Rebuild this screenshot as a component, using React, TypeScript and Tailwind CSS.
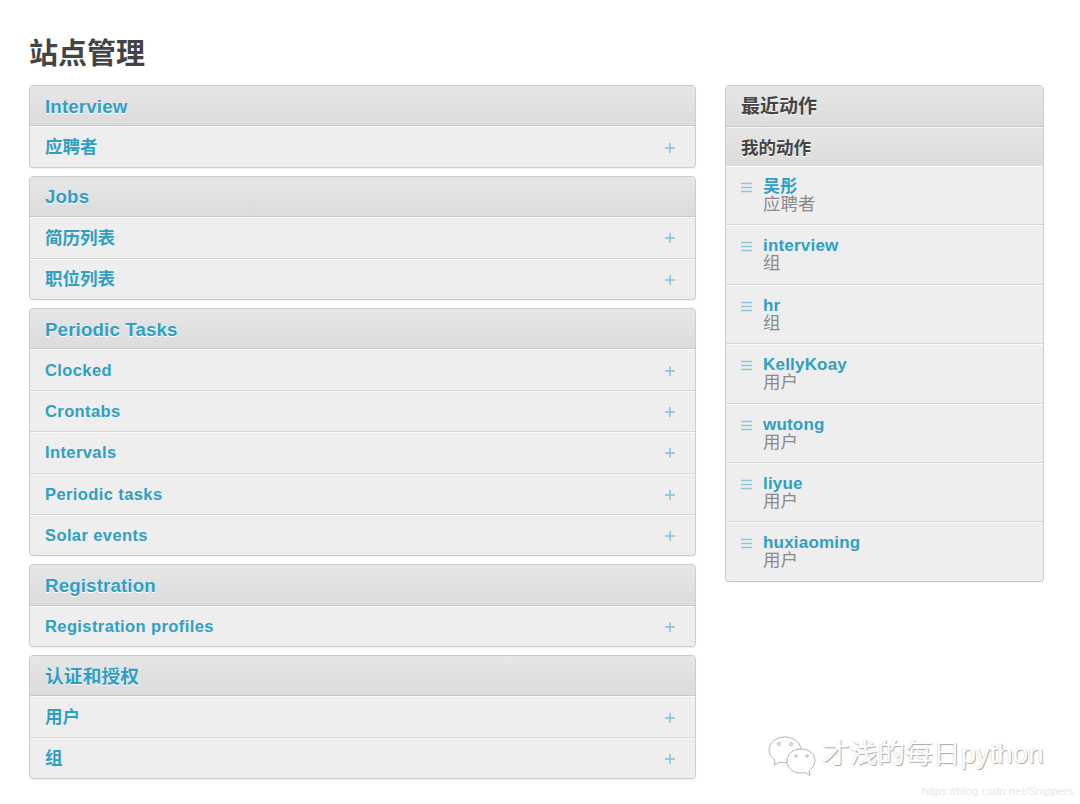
const FONT = "font-['Liberation_Sans','Noto_Sans_CJK_SC',sans-serif]";

const MODULES = [
  { title: "Interview", rows: ["应聘者"] },
  { title: "Jobs", rows: ["简历列表", "职位列表"] },
  { title: "Periodic Tasks", rows: ["Clocked", "Crontabs", "Intervals", "Periodic tasks", "Solar events"] },
  { title: "Registration", rows: ["Registration profiles"] },
  { title: "认证和授权", rows: ["用户", "组"] },
];

const ACTIONS = [
  { name: "吴彤", type: "应聘者" },
  { name: "interview", type: "组" },
  { name: "hr", type: "组" },
  { name: "KellyKoay", type: "用户" },
  { name: "wutong", type: "用户" },
  { name: "liyue", type: "用户" },
  { name: "huxiaoming", type: "用户" },
];

const isLatin = (s: string) => /^[A-Za-z ]+$/.test(s);

function Plus() {
  return (
    <svg width="10" height="10" viewBox="0 0 10 10" className="shrink-0 mt-[1px]">
      <path d="M5 0v10M0 5h10" stroke="#7fc0d8" strokeWidth="1.4" />
    </svg>
  );
}

function Lines() {
  return (
    <svg width="11" height="11" viewBox="0 0 11 11" className="shrink-0">
      <path d="M0 1.500h11M0 5.500h11M0 9.500h11" stroke="#8cc6da" strokeWidth="1.600" />
    </svg>
  );
}

function Panel({ title, rows }: { title: string; rows: string[] }) {
  return (
    <section className="border border-[#cccccc] rounded-[4px] overflow-hidden bg-[#eeeeee] shadow-[0_1px_1px_rgba(0,0,0,0.06)]">
      <h2 className="h-[40.4px] pt-[2px] flex items-center pl-[15px] text-[18.700px] tracking-[0.15px] font-bold text-[#2f9fc2] bg-gradient-to-b from-[#e6e6e6] to-[#dcdcdc] border-b border-[#c8c8c8] [text-shadow:0_1px_0_#ffffff]">
        {title}
      </h2>
      {rows.map((r, i) => (
        <div
          key={r}
          className={`flex items-center justify-between pl-[15px] pr-[20px] border-t border-[#fafafa] ${i < rows.length - 1 ? "h-[41.4px] border-b border-b-[#d6d6d6]" : "h-[40.4px]"}`}
        >
          <span
            className={
              isLatin(r)
                ? "text-[16.500px] tracking-[0.4px] font-bold text-[#2f9fc2]"
                : "text-[17.500px] font-bold text-[#2f9fc2]"
            }
          >
            {r}
          </span>
          <Plus />
        </div>
      ))}
    </section>
  );
}

export default function App() {
  return (
    <div className={`${FONT} relative w-[1080px] h-[804px] overflow-hidden bg-white`}>
      <div className="pt-[35px] pl-[29px] pr-[36px]">
        <h1 className="h-[50px] text-[29px] leading-[38px] font-bold text-[#444444]">站点管理</h1>
        <div className="flex gap-[29px] items-start">
          <div className="w-[667px] flex flex-col gap-[8px]">
            {MODULES.map((m) => (
              <Panel key={m.title} title={m.title} rows={m.rows} />
            ))}
          </div>
          <aside className="w-[319px] border border-[#cccccc] rounded-[4px] overflow-hidden bg-[#eeeeee] shadow-[0_1px_1px_rgba(0,0,0,0.06)]">
            <h2 className="h-[41px] pt-[2px] flex items-center pl-[15px] text-[19px] font-bold text-[#444444] bg-gradient-to-b from-[#e6e6e6] to-[#dcdcdc] border-b border-[#c8c8c8] [text-shadow:0_1px_0_#ffffff]">
              最近动作
            </h2>
            <h3 className="h-[39px] pt-[2px] flex items-center pl-[15px] text-[17.500px] font-bold text-[#444444] bg-gradient-to-b from-[#e6e6e6] to-[#dcdcdc] border-t border-[#f4f4f4] [text-shadow:0_1px_0_#ffffff]">
              我的动作
            </h3>
            {ACTIONS.map((a, i) => (
              <div
                key={a.name}
                className={`flex gap-[11px] pl-[15px] pt-[15px] border-t border-[#fafafa] ${i < ACTIONS.length - 1 ? "h-[59.4px] border-b border-b-[#d8d8d8]" : "h-[58.4px]"}`}
              >
                <Lines />
                <div className="flex flex-col -mt-[4px]">
                  <span className="text-[17px] tracking-[0.2px] leading-[17px] font-bold text-[#2f9fc2]">{a.name}</span>
                  <span className="text-[17.500px] leading-[18px] text-[#8a8a8a]">{a.type}</span>
                </div>
              </div>
            ))}
          </aside>
        </div>
      </div>

      {/* watermark */}
      <div className="absolute left-[768px] top-[735px] flex items-center gap-[4px]">
        <svg width="50" height="42" viewBox="0 0 50 42" fill="#ffffff" stroke="#b4b4b4" strokeWidth="1">
          <path d="M17 2C8 2 1 8 1 15c0 4 2 7 6 10l-1 5 6-3c1 .4 3 .6 5 .6C26 27.600 33 22 33 15S26 2 17 2z" />
          <path d="M33 14c-8 0-14 5-14 12s6 12 14 12c2 0 3 0 4-.500l5 3-1-4.500c3-2.500 6-6 6-10 0-7-6-12-14-12z" />
          <circle cx="11" cy="9" r="1.500" />
          <circle cx="23" cy="9" r="1.500" />
          <circle cx="28" cy="21" r="1.200" />
          <circle cx="39" cy="21" r="1.200" />
        </svg>
        <span className="text-[27.700px] leading-[40px] text-white [text-shadow:1px_1px_1px_#a8a8a8,-0.5px_-0.5px_0_#dcdcdc] -mt-[4px]">
          才浅的每日python
        </span>
      </div>
      <span className="absolute left-[922px] top-[784px] text-[11.500px] leading-[14px] text-[#e8e8e8]">
        https://blog.csdn.net/Snippers
      </span>
    </div>
  );
}
